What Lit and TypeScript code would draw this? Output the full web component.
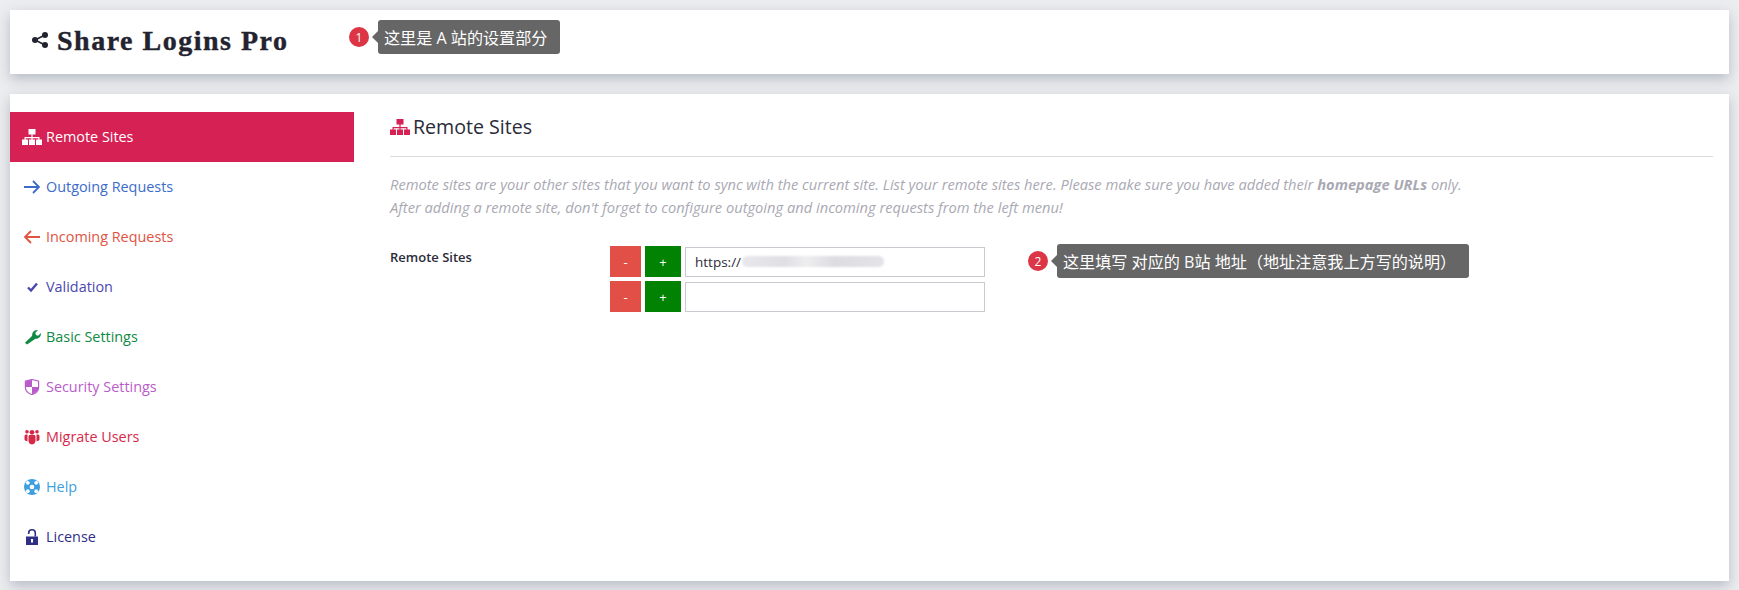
import { LitElement, html, css, svg } from "lit";
import { customElement } from "lit/decorators.js";

const sitemap = svg`<path d="M6.500 0h7v5.500h-7zM9.400 5.500h1.200v2.600h6.900v2.900h-1.200V9.300h-5.700V11H9.400V9.300H3.700V11H2.500V8.100h6.900z"/><path d="M0 10.500h6V16H0zM7 10.500h6V16H7zM14 10.500h6V16h-6z"/>`;
const icons: Record<string, unknown> = {
  sitemap,
  out: svg`<path d="M2 8h15M11 2l6 6-6 6" fill="none" stroke="currentColor" stroke-width="1.800"/>`,
  in: svg`<path d="M18 8H3M9 2L3 8l6 6" fill="none" stroke="currentColor" stroke-width="1.800"/>`,
  check: svg`<path d="M6 8.500l3 3 6-7" fill="none" stroke="currentColor" stroke-width="2.400"/>`,
  wrench: svg`<path d="M5 15.500L3 13.700l7.200-7C9.700 3.700 12.300.5 16 1l-2.700 2.700.6 2.400 2.300.6 2.700-2.700c.5 3.700-2.700 6.300-5.500 5.700z"/>`,
  shield: svg`<path d="M3.400 2.200L10 .5l6.600 1.700v6.300c0 3.300-3 5.900-6.600 7.200-3.600-1.300-6.600-3.900-6.600-7.200z" fill="none" stroke="currentColor" stroke-width="1.200"/><path d="M3.600 2.400L10 .8v7.200h6.400v.5c0 3-2.800 5.500-6.400 6.800V8H3.600z"/>`,
  users: svg`<circle cx="10" cy="3.300" r="2.400"/><circle cx="5" cy="2.800" r="1.800"/><circle cx="15" cy="2.800" r="1.800"/><path d="M6.500 7.400c0-.9.900-1.400 1.700-1.400h3.600c.8 0 1.700.5 1.700 1.400v4.400c0 1.600-1.200 3.700-3.500 3.700s-3.500-2.100-3.500-3.700z"/><path d="M5.500 5.500H4C3 5.500 2.500 6.300 2.500 7.500v2.700c0 1 .8 1.800 3 2zM14.500 5.500H16c1 0 1.500.8 1.500 2v2.700c0 1-.8 1.800-3 2z"/>`,
  help: svg`<circle cx="10" cy="8" r="8"/><circle cx="10" cy="8" r="2.300" fill="#fff"/><g fill="#fff"><circle cx="5.800" cy="3.800" r="1.900"/><circle cx="14.200" cy="3.800" r="1.900"/><circle cx="5.800" cy="12.200" r="1.900"/><circle cx="14.200" cy="12.200" r="1.900"/></g>`,
  lock: svg`<path d="M4 7.500h12V16H4z"/><path d="M6.700 5V4C6.700 2 8 .8 10 .8s3.300 1.200 3.300 3.200v3.500" fill="none" stroke="currentColor" stroke-width="1.600"/><path d="M9 10h2v3.500H9z" fill="#fff"/>`,
};

const items = [
  { k: "sitemap", t: "Remote Sites", c: "active" },
  { k: "out", t: "Outgoing Requests", c: "blue" },
  { k: "in", t: "Incoming Requests", c: "orange" },
  { k: "check", t: "Validation", c: "indigo" },
  { k: "wrench", t: "Basic Settings", c: "green" },
  { k: "shield", t: "Security Settings", c: "purple" },
  { k: "users", t: "Migrate Users", c: "red" },
  { k: "help", t: "Help", c: "sky" },
  { k: "lock", t: "License", c: "navy" },
];

@customElement("app-root")
export class AppRoot extends LitElement {
  static styles = css`
    :host {
      display: block;
      height: 590px;
      box-sizing: border-box;
      padding: 10px 10px 0;
      background: #ecedef;
      font-family: "Open Sans", "Noto Sans CJK SC", sans-serif;
      font-size: 14.400px;
      color: #2b2b38;
      overflow: hidden;
      position: relative;
    }
    .card {
      background: #fff;
      box-shadow: 0 5px 12px rgba(120, 128, 150, 0.45);
    }
    .head {
      height: 64px;
      display: flex;
      align-items: center;
      gap: 9px;
      padding-left: 22px;
      box-sizing: border-box;
    }
    .head svg {
      width: 16px;
      height: 16px;
      fill: #23232f;
      margin-top: -4px;
    }
    .brand {
      font-family: "Liberation Serif", serif;
      font-weight: 700;
      font-size: 28px;
      letter-spacing: 1.500px;
      -webkit-text-stroke: 0.400px #23232f;
      color: #23232f;
      margin-top: -2px;
    }
    .main {
      margin-top: 20px;
      height: 487px;
      display: flex;
    }
    .side {
      width: 344px;
      padding-top: 18px;
      flex: none;
    }
    .item {
      height: 50px;
      display: flex;
      align-items: center;
      gap: 4px;
      padding-left: 12px;
    }
    .item span {
      margin-top: -2px;
    }
    .item svg {
      width: 20px;
      height: 16px;
      fill: currentColor;
      flex: none;
    }
    .active { background: #d52153; color: #fff; }
    .blue { color: #3b6cc9; }
    .orange { color: #e0533f; }
    .indigo { color: #4a48b0; }
    .green { color: #0f8a44; }
    .purple { color: #b95cc9; }
    .red { color: #d6294a; }
    .sky { color: #3d9fe0; }
    .navy { color: #2f2f86; }
    .content {
      flex: 1;
      padding: 17px 16px 0 36px;
    }
    .title {
      display: flex;
      align-items: center;
      gap: 3px;
      height: 30px;
      font-size: 19.600px;
      padding-bottom: 15px;
      border-bottom: 1px solid #dcdcdf;
    }
    .title svg {
      width: 20px;
      height: 16px;
      fill: #d52153;
      margin-top: 2px;
    }
    .desc {
      margin: 16px 0 0;
      font-style: italic;
      font-size: 14.680px;
      line-height: 23px;
      color: #a9a9b3;
    }
    .form {
      display: flex;
      margin-top: 27px;
    }
    .label {
      width: 220px;
      font-size: 13px;
      font-weight: 600;
      padding-top: 2px;
    }
    .rows {
      display: flex;
      flex-direction: column;
      gap: 4px;
    }
    .row {
      display: flex;
      align-items: center;
      gap: 4px;
    }
    .btn {
      height: 31px;
      display: flex;
      align-items: center;
      justify-content: center;
      color: #fff;
      font-size: 13px;
    }
    .minus { width: 31px; background: #e14f47; }
    .plus { width: 36px; background: #028202; }
    .field {
      width: 300px;
      height: 30px;
      box-sizing: border-box;
      border: 1px solid #c9c9cf;
      display: flex;
      align-items: center;
      padding-left: 9px;
      font-size: 13.500px;
      background: #fff;
    }
    .smudge {
      width: 142px;
      height: 11px;
      border-radius: 6px;
      background: linear-gradient(90deg, #e8e8ec, #dfdfe4 30%, #eeeef0 45%, #dcdce2 65%, #e3e3e8 100%);
      filter: blur(1px);
      margin-left: 1px;
    }
    .note {
      position: absolute;
      display: flex;
      align-items: center;
    }
    .n1 { left: 349px; top: 20px; }
    .n2 { left: 1028px; top: 244px; }
    .badge {
      width: 20px;
      height: 20px;
      border-radius: 50%;
      background: #dc3545;
      color: #fff;
      font-size: 12px;
      display: flex;
      align-items: center;
      justify-content: center;
      margin-right: 9px;
    }
    .tip {
      position: relative;
      background: #666;
      color: #fff;
      border-radius: 3px;
      font-size: 16.100px;
      white-space: pre;
      padding: 0 13px 0 6px;
      height: 34px;
      display: flex;
      align-items: center;
    }
    .tip::before {
      content: "";
      position: absolute;
      left: -6px;
      top: 50%;
      margin-top: -6px;
      border: 6px solid transparent;
      border-left: 0;
      border-right-color: #666;
    }
  `;

  render() {
    return html`
      <header class="card head">
        <svg viewBox="0 0 16 16">
          <circle cx="13" cy="3" r="3"></circle>
          <circle cx="13" cy="13" r="3"></circle>
          <circle cx="3" cy="8" r="3"></circle>
          <path d="M3 8L13 3M3 8l10 5" stroke="#23232f" stroke-width="1.600"></path>
        </svg>
        <span class="brand">Share Logins Pro</span>
      </header>
      <section class="card main">
        <nav class="side">
          ${items.map(
            (i) => html`<div class="item ${i.c}">
              <svg viewBox="0 0 20 16">${icons[i.k]}</svg><span>${i.t}</span>
            </div>`
          )}
        </nav>
        <div class="content">
          <div class="title">
            <svg viewBox="0 0 20 16">${sitemap}</svg><span>Remote Sites</span>
          </div>
          <p class="desc">
            Remote sites are your other sites that you want to sync with the current site. List your remote sites here. Please make sure you have added their <b>homepage URLs</b> only.<br />
            After adding a remote site, don't forget to configure outgoing and incoming requests from the left menu!
          </p>
          <div class="form">
            <div class="label">Remote Sites</div>
            <div class="rows">
              <div class="row">
                <div class="btn minus">-</div>
                <div class="btn plus">+</div>
                <div class="field">https://<span class="smudge"></span></div>
              </div>
              <div class="row">
                <div class="btn minus">-</div>
                <div class="btn plus">+</div>
                <div class="field"></div>
              </div>
            </div>
          </div>
        </div>
      </section>
      <div class="note n1">
        <span class="badge">1</span><span class="tip">这里是 A 站的设置部分</span>
      </div>
      <div class="note n2">
        <span class="badge">2</span><span class="tip">这里填写 对应的 B站 地址（地址注意我上方写的说明）</span>
      </div>
    `;
  }
}
